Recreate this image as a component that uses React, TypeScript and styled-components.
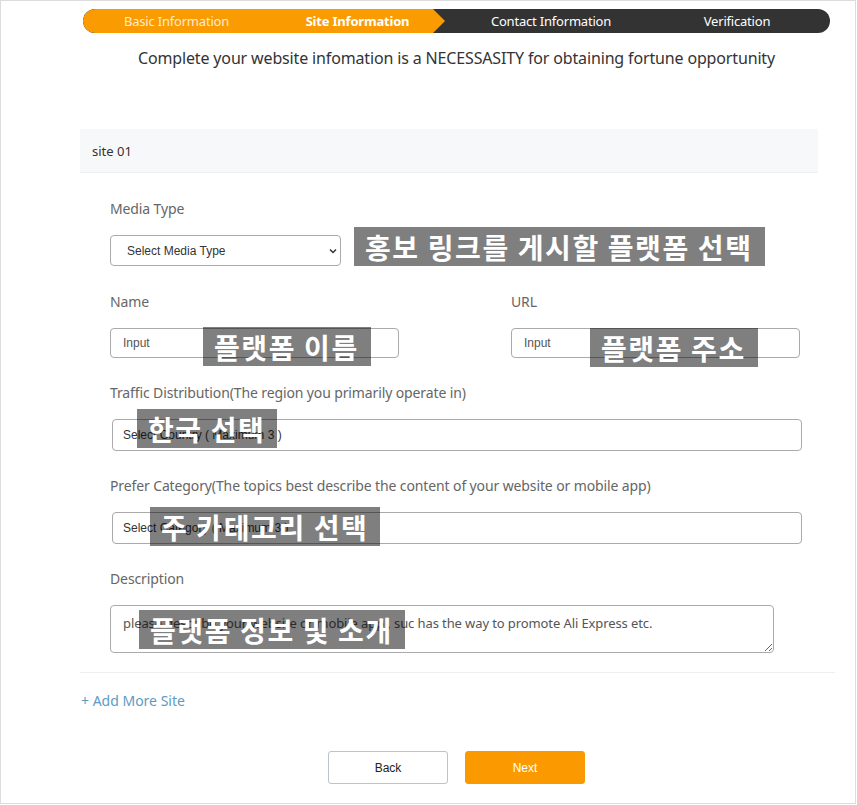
import React from "react";
import styled, { createGlobalStyle } from "styled-components";

const GlobalStyle = createGlobalStyle`
  html, body { margin: 0; padding: 0; background: #fff; }
  body { font-family: "Noto Sans", "Noto Sans CJK KR", sans-serif; color: #333; }
  * { box-sizing: border-box; }
`;

const Frame = styled.div`
  width: 856px;
  height: 804px;
  border: 1px solid #dcdcdc;
  padding-left: 79px;
  display: flex;
  flex-direction: column;
`;

const Stepper = styled.div`
  display: flex;
  width: 747px;
  height: 24px;
  margin: 8px 0 0 3px;
  background: #333;
  border-radius: 12px;
  overflow: hidden;
`;

const DoneTrack = styled.div`
  position: relative;
  display: flex;
  width: 350px;
  height: 100%;
  background: #fb9b02;
  border-radius: 12px 0 0 12px;
  &::after {
    content: "";
    position: absolute;
    right: -12px;
    top: 0;
    border-left: 12px solid #fb9b02;
    border-top: 12px solid transparent;
    border-bottom: 12px solid transparent;
  }
`;

const Step = styled.span<{ $w: number; $pl?: number; $active?: boolean; $muted?: boolean }>`
  width: ${(p) => p.$w}px;
  padding-left: ${(p) => p.$pl ?? 0}px;
  flex: none;
  text-align: center;
  font-size: 13px;
  letter-spacing: -0.2px;
  line-height: 24px;
  white-space: nowrap;
  font-weight: ${(p) => (p.$active ? 700 : 400)};
  color: ${(p) => (p.$muted ? "rgba(255,255,255,0.82)" : "#fff")};
`;

const Subtitle = styled.p`
  width: 747px;
  margin: 13px 0 0 3px;
  text-align: center;
  font-size: 16px;
  letter-spacing: -0.15px;
  line-height: 24px;
  color: #333;
`;

const Section = styled.section`
  width: 755px;
  margin-top: 59px;
  border-bottom: 1px solid #eee;
`;

const Panel = styled.div`
  width: 738px;
`;

const PanelHeader = styled.div`
  height: 44px;
  display: flex;
  align-items: center;
  padding-left: 12px;
  background: #f7f8fa;
  border-bottom: 1px solid #eef0f2;
  font-size: 13px;
  color: #333;
`;

const Form = styled.div`
  display: flex;
  flex-direction: column;
  gap: 25px;
  padding: 26px 0 19px 30px;
`;

const Row = styled.div`
  display: grid;
  grid-template-columns: 289px 289px;
  column-gap: 112px;
  margin-top: 1px;
`;

const Field = styled.div`
  position: relative;
  display: flex;
  flex-direction: column;
  gap: 16px;
`;

const Label = styled.label`
  font-size: 14px;
  letter-spacing: -0.12px;
  line-height: 20px;
  color: #666;
`;

const SelectBox = styled.div<{ $w: number; $h: number; $ml?: number }>`
  width: ${(p) => p.$w}px;
  height: ${(p) => p.$h}px;
  margin-left: ${(p) => p.$ml ?? 0}px;
  display: flex;
  align-items: center;
  justify-content: space-between;
  padding: 0 2px 0 ${(p) => (p.$ml ? 10 : 16)}px;
  border: 1px solid #aaa;
  border-radius: 4px;
  font-family: "Liberation Sans", Arial, sans-serif;
  font-size: 12px;
  color: #333;
  background: #fff;
`;

const TextInput = styled.input`
  width: 289px;
  height: 30px;
  padding: 0 12px;
  border: 1px solid #aaa;
  border-radius: 4px;
  font-family: "Liberation Sans", Arial, sans-serif;
  font-size: 12px;
  color: #333;
  outline: none;
  &::placeholder { color: #555; }
`;

const TextArea = styled.textarea`
  width: 664px;
  height: 48px;
  padding: 8px 12px;
  border: 1px solid #aaa;
  border-radius: 4px;
  font-family: "Noto Sans", sans-serif;
  font-size: 13px;
  letter-spacing: -0.1px;
  line-height: 18px;
  color: #555;
  resize: vertical;
  outline: none;
`;

const Caption = styled.div<{ $x: number; $y: number }>`
  position: absolute;
  left: ${(p) => p.$x}px;
  top: ${(p) => p.$y}px;
  height: 39px;
  padding: 0 12px 0 11px;
  display: flex;
  align-items: center;
  background: rgba(0, 0, 0, 0.5);
  color: #fff;
  font-family: "Noto Sans CJK KR", sans-serif;
  font-weight: 700;
  font-size: 28px;
  letter-spacing: 1.6px;
  white-space: nowrap;
  pointer-events: none;
`;

const AddMore = styled.a`
  margin: 18px 0 0 1px;
  font-size: 14px;
  line-height: 20px;
  color: #5e9bc4;
  text-decoration: none;
`;

const Actions = styled.div`
  width: 747px;
  margin: 40px 0 0 3px;
  display: flex;
  justify-content: center;
  gap: 17px;
`;

const Button = styled.button<{ $primary?: boolean }>`
  width: 120px;
  height: 33px;
  border-radius: 3px;
  border: 1px solid ${(p) => (p.$primary ? "#fa9a00" : "#bcc3c9")};
  background: ${(p) => (p.$primary ? "#fa9a00" : "#fff")};
  color: ${(p) => (p.$primary ? "#fff" : "#222")};
  font-family: "Liberation Sans", Arial, sans-serif;
  font-size: 12px;
`;

const Chevron = () => (
  <svg width="10" height="10" viewBox="0 0 10 10" fill="none">
    <path d="M2 3.5 L5 6.5 L8 3.5" stroke="#333" strokeWidth="1.5" />
  </svg>
);

export default function App() {
  return (
    <>
      <GlobalStyle />
      <Frame>
        <Stepper>
          <DoneTrack>
            <Step $w={187} $muted>Basic Information</Step>
            <Step $w={163} $pl={12} $active>Site Information</Step>
          </DoneTrack>
          <Step $w={236}>Contact Information</Step>
          <Step $w={136}>Verification</Step>
        </Stepper>
        <Subtitle>Complete your website infomation is a NECESSASITY for obtaining fortune opportunity</Subtitle>
        <Section>
          <Panel>
            <PanelHeader>site 01</PanelHeader>
            <Form>
              <Field>
                <Label>Media Type</Label>
                <SelectBox $w={231} $h={31}>
                  <span>Select Media Type</span>
                  <Chevron />
                </SelectBox>
                <Caption $x={244} $y={28}>홍보 링크를 게시할 플랫폼 선택</Caption>
              </Field>
              <Row>
                <Field>
                  <Label>Name</Label>
                  <TextInput placeholder="Input" />
                  <Caption $x={93} $y={35}>플랫폼 이름</Caption>
                </Field>
                <Field>
                  <Label>URL</Label>
                  <TextInput placeholder="Input" />
                  <Caption $x={79} $y={36}>플랫폼 주소</Caption>
                </Field>
              </Row>
              <Field>
                <Label>Traffic Distribution(The region you primarily operate in)</Label>
                <SelectBox $w={690} $h={32} $ml={2}>
                  <span>Select Country ( Maximum 3 )</span>
                </SelectBox>
                <Caption $x={27} $y={26}>한국 선택</Caption>
              </Field>
              <Field>
                <Label>Prefer Category(The topics best describe the content of your website or mobile app)</Label>
                <SelectBox $w={690} $h={32} $ml={2}>
                  <span>Select Category ( Maximum 3 )</span>
                </SelectBox>
                <Caption $x={40} $y={31}>주 카테고리 선택</Caption>
              </Field>
              <Field>
                <Label>Description</Label>
                <TextArea defaultValue="please describe your website or mobile app , suc has the way to promote Ali Express etc." />
                <Caption $x={29} $y={41}>플랫폼 정보 및 소개</Caption>
              </Field>
            </Form>
          </Panel>
        </Section>
        <AddMore href="#">+ Add More Site</AddMore>
        <Actions>
          <Button>Back</Button>
          <Button $primary>Next</Button>
        </Actions>
      </Frame>
    </>
  );
}
